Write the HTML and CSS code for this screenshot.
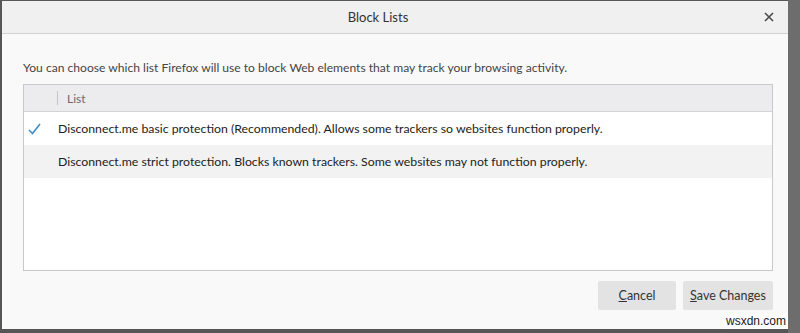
FILE: index.html
```html
<!DOCTYPE html>
<html lang="en">
<head>
  <meta charset="UTF-8">
  <title>Block Lists</title>
  <link rel="stylesheet" href="styles.css">
</head>
<body>
  <div class="dialog">
    <div class="header">
      <div class="title">Block Lists</div>
      <div class="close">
        <svg width="10" height="10" viewBox="0 0 10 10"><path d="M1 1L9 9M9 1L1 9" stroke="#4a4a4a" stroke-width="1.6"/></svg>
      </div>
    </div>
    <div class="content">
      <p class="desc">You can choose which list Firefox will use to block Web elements that may track your browsing activity.</p>
      <div class="lista">
        <div class="lista-head">
          <div class="col-check"></div>
          <div class="col-name">List</div>
        </div>
        <div class="row">
          <div class="row-check">
            <svg width="13" height="12" viewBox="0 0 13 12"><path d="M1 7L4.5 10.5L12 1" fill="none" stroke="#3d8fc6" stroke-width="1.6"/></svg>
          </div>
          <div class="row-text">Disconnect.me basic protection (Recommended). Allows some trackers so websites function properly.</div>
        </div>
        <div class="row alt">
          <div class="row-check"></div>
          <div class="row-text">Disconnect.me strict protection. Blocks known trackers. Some websites may not function properly.</div>
        </div>
      </div>
      <div class="footer">
        <button class="btn btn-cancel"><u>C</u>ancel</button>
        <button class="btn btn-save"><u>S</u>ave Changes</button>
      </div>
    </div>
    <div class="marca">wsxdn.com</div>
  </div>
</body>
</html>
```

FILE: styles.css
```css
body {
    margin: 0;
    height: 333px;
    overflow: hidden;
    background: linear-gradient(to right, #565656 788px, #6d6d6d 788px);
    font-family: "Lato", "Noto Sans", sans-serif;
    font-size: 12px;
    color: #2b2b2b;
}
.dialog {
    position: relative;
    margin: 1px 0 0 2px;
    width: 786px;
    height: 328px;
    background: #f9f9f9;
}
.header {
    display: flex;
    align-items: center;
    height: 32px;
    background: #f0f0f0;
    border-bottom: 1px solid #d2d2d2;
}
.title {
    flex: 1;
    text-align: center;
    font-size: 13px;
    color: #333;
    padding-left: 2px;
}
.close {
    width: 34px;
    display: flex;
    justify-content: center;
    padding-right: 2px;
}
.content {
    padding: 26px 15px 0 21px;
}
.desc {
    margin: 0 0 8px 0;
    line-height: 16px;
    font-size: 12.1px;
    color: #444;
}
.lista {
    height: 185px;
    border: 1px solid #c9c9c9;
    background: #fff;
}
.lista-head {
    display: flex;
    align-items: center;
    height: 26px;
    background: #ececef;
    border-bottom: 1px solid #d3d3d6;
}
.col-check {
    width: 33px;
    height: 14px;
    border-right: 1px solid #c4c4c8;
}
.col-name {
    padding-left: 9px;
    color: #6a6a6a;
}
.row {
    display: flex;
    align-items: center;
    height: 33px;
}
.row.alt {
    background: #f2f2f2;
}
.row-check {
    width: 34px;
    display: flex;
    padding-left: 4px;
    box-sizing: border-box;
}
.row-text {
    font-size: 12.3px;
    color: #222;
}
.footer {
    display: flex;
    justify-content: flex-end;
    gap: 7px;
    margin-top: 10px;
}
.btn {
    height: 29px;
    border: none;
    border-radius: 2px;
    background: #e3e3e3;
    font-family: inherit;
    font-size: 12.5px;
    color: #333;
    padding: 0;
}
.btn-cancel { width: 78px; }
.btn-save { width: 90px; }
.marca {
    position: absolute;
    right: 0;
    bottom: 0;
    padding: 1px 2px 1px 3px;
    background: #fdfdfd;
    font-family: "Liberation Sans", sans-serif;
    font-size: 12px;
    color: #1a1a1a;
}
```
